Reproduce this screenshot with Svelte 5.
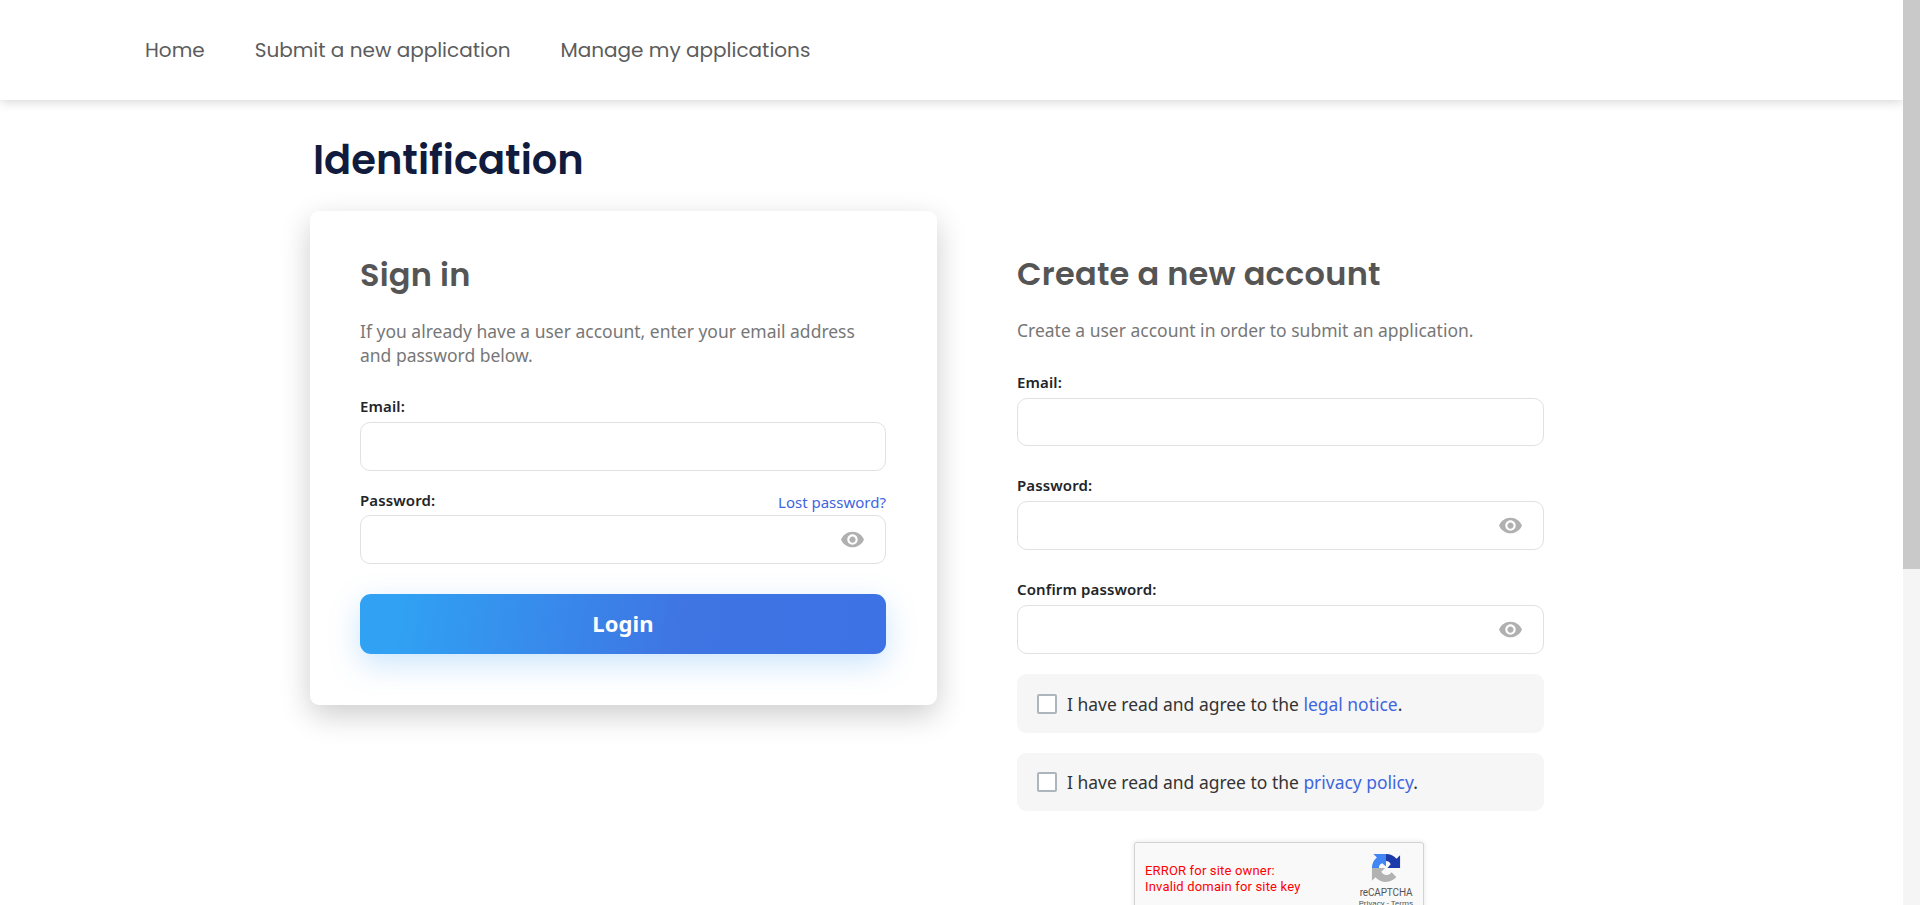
{#snippet eye()}
  <svg class="eye" viewBox="0 0 24 24" width="25" height="25"><path fill="#b0b0b0" d="M12 4.5C7 4.5 2.73 7.61 1 12c1.73 4.39 6 7.5 11 7.5s9.27-3.11 11-7.5c-1.73-4.39-6-7.5-11-7.5zM12 17c-2.76 0-5-2.24-5-5s2.24-5 5-5 5 2.24 5 5-2.24 5-5 5zm0-8c-1.66 0-3 1.34-3 3s1.34 3 3 3 3-1.34 3-3-1.34-3-3-3z"/></svg>
{/snippet}

<div class="page">
  <div class="view">
    <header>
      <a href="#home">Home</a>
      <a href="#submit">Submit a new application</a>
      <a href="#manage">Manage my applications</a>
    </header>
    <main>
      <h1>Identification</h1>
      <div class="cols">
        <section class="card">
          <h2>Sign in</h2>
          <p>If you already have a user account, enter your email address<br />and password below.</p>
          <label for="e1">Email:</label>
          <div class="field"><input id="e1" /></div>
          <div class="row"><label for="p1">Password:</label><a href="#lost">Lost password?</a></div>
          <div class="field tight"><input id="p1" type="password" />{@render eye()}</div>
          <button>Login</button>
        </section>
        <section class="create">
          <h2>Create a new account</h2>
          <p>Create a user account in order to submit an application.</p>
          <label for="e2">Email:</label>
          <div class="field short"><input id="e2" /></div>
          <label for="p2">Password:</label>
          <div class="field"><input id="p2" type="password" />{@render eye()}</div>
          <label for="p3">Confirm password:</label>
          <div class="field"><input id="p3" type="password" />{@render eye()}</div>
          <div class="agree"><i class="box"></i><span>I have read and agree to the <a href="#legal">legal notice</a>.</span></div>
          <div class="agree second"><i class="box"></i><span>I have read and agree to the <a href="#privacy">privacy policy</a>.</span></div>
          <div class="captcha">
            <div class="err">ERROR for site owner:<br />Invalid domain for site key</div>
            <div class="brand">
              <svg viewBox="0 0 64 64" width="30" height="30">
                <path fill="#1c3aa9" d="M62 32V5l-7.500 7.500A29 29 0 0 0 32 2v15c5 0 8 2 10 7l-7 8z"/>
                <path fill="#4285f4" d="M32 2H5l7.500 7.500A29 29 0 0 0 2 32h15c0-5 2-8 7-10l8 7z"/>
                <path fill="#b2b2b2" d="M2 32v27l7.500-7.500A29 29 0 0 0 54 51L44 41c-3 4-7 6-11 6-5 0-9-3-11-7l8-8z"/>
              </svg>
              <span class="rc">reCAPTCHA</span>
              <span class="pt">Privacy - Terms</span>
            </div>
          </div>
        </section>
      </div>
    </main>
  </div>
  <div class="scroll"><div class="thumb"></div></div>
</div>

<style>
  :global(body) { overflow: hidden; background: #fff; }
  .page { display: flex; height: 905px; overflow: hidden; font-family: "Noto Sans", sans-serif; color: #333; }
  .view { flex: 1; min-width: 0; }
  a { text-decoration: none; color: #4065de; }
  header { height: 100px; box-sizing: border-box; padding-left: 145px; display: flex; gap: 50px; box-shadow: 0 0 12px rgba(0,0,0,.22); }
  header a { font: 400 20px/100px Poppins, Inter, sans-serif; color: #5c5c5c; white-space: nowrap; }
  main { padding-left: 310px; }
  h1 { box-sizing: border-box; margin: 0; padding: 30px 0 0 3px; height: 111px; font: 600 40px/60px Poppins, Inter, sans-serif; color: #111b3d; }
  .cols { display: flex; gap: 80px; align-items: flex-start; }
  .card { box-sizing: border-box; width: 627px; height: 494px; padding: 40px 51px 0 50px; border-radius: 9px; box-shadow: 0 10px 30px rgba(0,0,0,.2); }
  .create { width: 527px; padding-top: 39px; }
  h2 { margin: 0; height: 68px; font: 600 32px/48px Poppins, Inter, sans-serif; letter-spacing: .24px; color: #555; }
  p { margin: 0; font-size: 17.490px; line-height: 24px; color: #777; white-space: nowrap; }
  label { display: block; font-size: 15px; line-height: 20px; letter-spacing: .12px; font-weight: 600; color: #212529; margin-top: 29px; }
  .create p { margin-bottom: 30px; }
  .field { position: relative; margin-top: 6px; height: 49px; }
  .field.tight { margin-top: 3px; }
  .field.short { height: 48px; }
  input { display: block; box-sizing: border-box; width: 100%; height: 100%; border: 1px solid #e1e1e1; border-radius: 10px; background: #fff; padding: 0 20px; }
  .eye { position: absolute; right: 21px; top: 12px; }
  .row { display: flex; justify-content: space-between; align-items: flex-start; margin-top: 19px; }
  .row label { margin: 0; }
  .row a { font-size: 15px; line-height: 20px; margin-top: 2px; }
  button { display: block; width: 100%; height: 60px; margin-top: 30px; border: 0; border-radius: 11px; color: #fff; font: 700 22px/58px "Noto Sans", sans-serif; letter-spacing: .1px; padding: 0 0 2px; background: linear-gradient(100deg, #30a1f3 8%, #3f74e3 62%, #3d72e6); box-shadow: 0 10px 30px rgba(48,150,243,.25); }
  .agree { box-sizing: border-box; height: 59px; margin-top: 20px; border-radius: 9px; background: #f6f6f6; display: flex; align-items: center; padding-left: 20px; gap: 10px; font-size: 17.470px; line-height: 24px; }
  .agree.second { height: 58px; }
  .box { box-sizing: border-box; width: 20px; height: 20px; border: 2px solid #adb5bd; border-radius: 2px; background: #fff; }
  .captcha { margin: 31px 0 0 117px; width: 290px; height: 76px; box-sizing: border-box; border: 1px solid #d3d3d3; border-radius: 3px; background: #f9f9f9; box-shadow: 0 0 4px 1px rgba(0,0,0,.08); display: flex; justify-content: space-between; font-family: Roboto, sans-serif; }
  .err { color: #f00; font-size: 13px; line-height: 16px; letter-spacing: .17px; padding: 20px 0 0 10px; }
  .brand { display: flex; flex-direction: column; align-items: center; width: 74px; padding-top: 10px; color: #555; }
  .rc { font-size: 10px; line-height: 12px; margin-top: 4px; letter-spacing: -.15px; }
  .pt { font-size: 8px; line-height: 10px; }
  .scroll { width: 17px; background: #f5f5f5; }
  .thumb { height: 569px; background: #c9c9c9; }
</style>
